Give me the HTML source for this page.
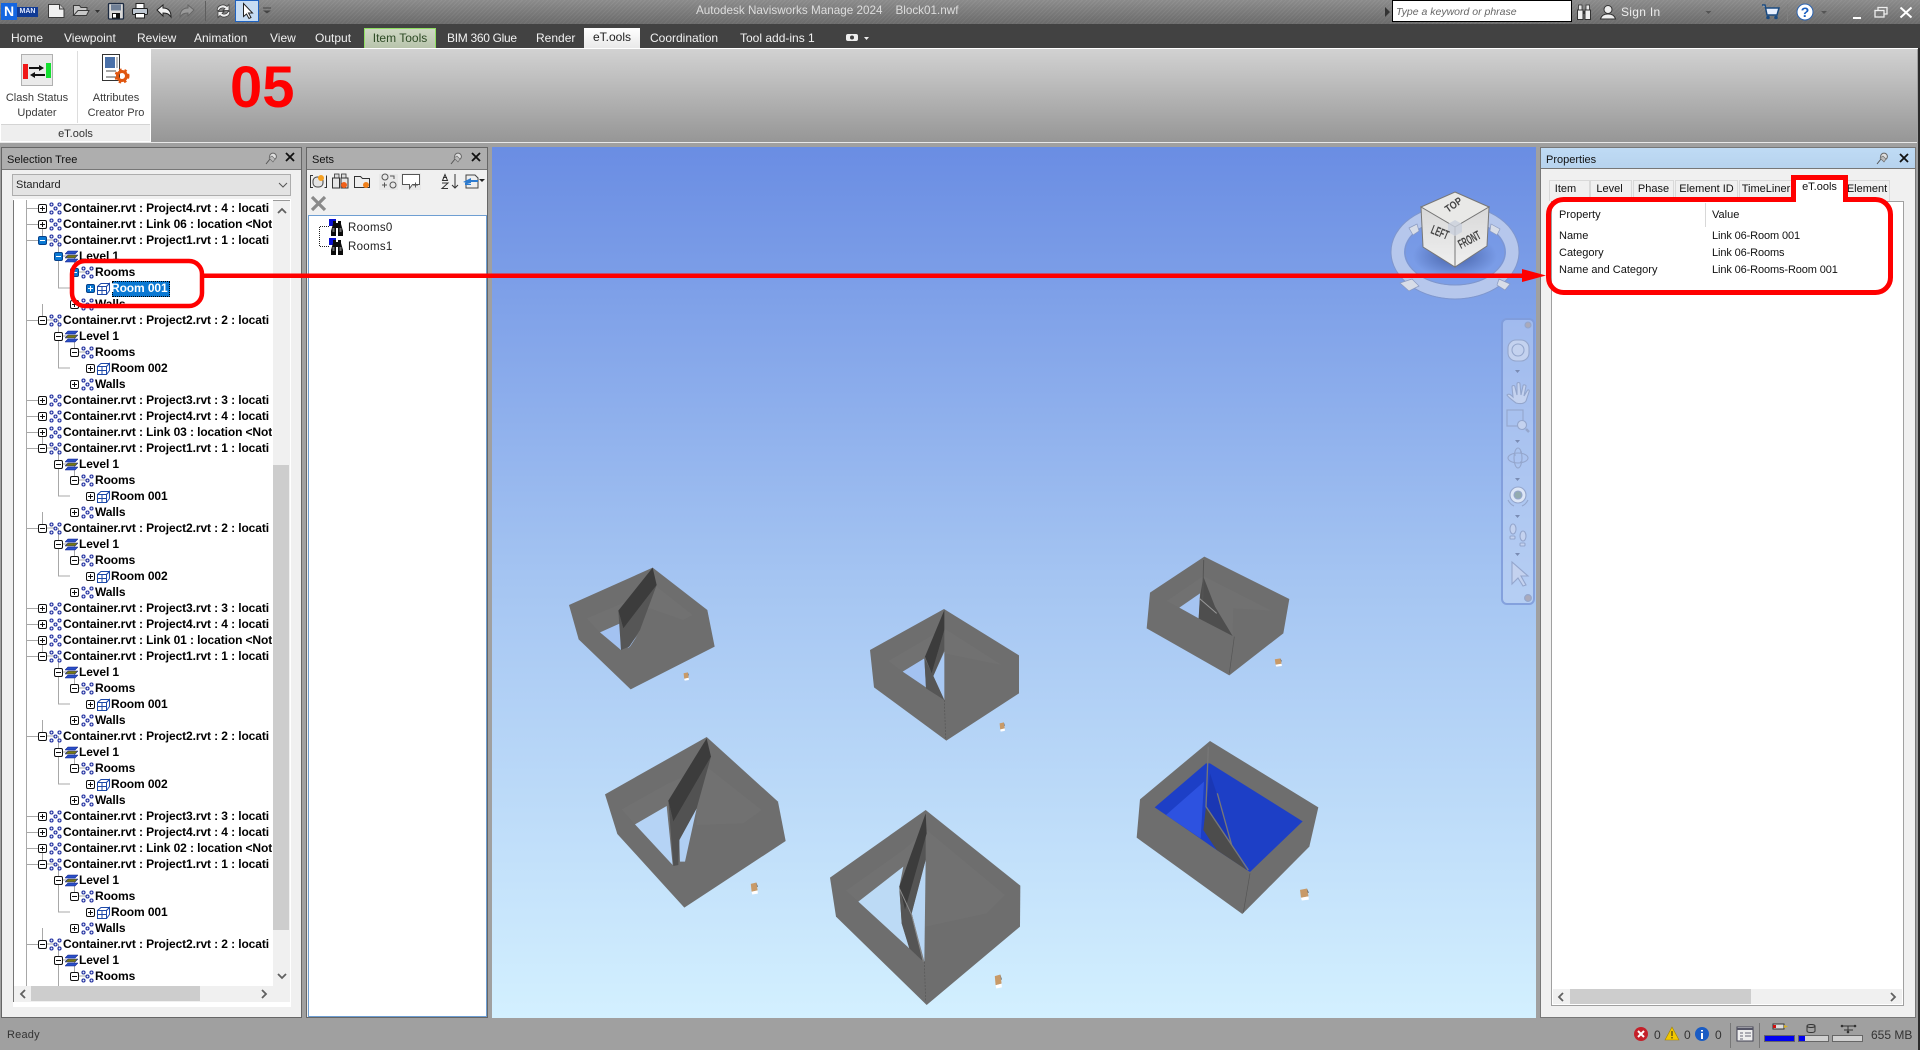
<!DOCTYPE html>
<html><head><meta charset="utf-8"><title>Navisworks</title>
<style>
html,body{margin:0;padding:0;width:1920px;height:1050px;overflow:hidden;background:#a0a0a0;font-family:"Liberation Sans",sans-serif;font-size:12px;color:#111}
div,span,svg,i{position:absolute;box-sizing:border-box}
svg{overflow:visible}
.t{white-space:nowrap;line-height:14px}
.tab{color:#f2f2f2;top:31px}
.r{left:0;height:16px;width:280px;font-weight:bold;font-size:12px;line-height:16px;white-space:nowrap;color:#000}
.r span{top:0;letter-spacing:-.1px}
.r i{top:4px;width:9px;height:9px;border:1px solid #111;border-radius:2px;background:#fff}
.r i::before{content:"";position:absolute;left:1px;right:1px;top:3px;height:1px;background:#111}
.r i.p::after{content:"";position:absolute;top:1px;bottom:1px;left:3px;width:1px;background:#111}
.r i.s{background:#0a78d2;border-color:#05408a}
.r i.s::before,.r i.s::after{background:#fff}
.r svg{top:2px;width:13px;height:13px}
.l0 i{left:38px}.l0 svg{left:49px}.l0 span{left:63px}
.l1 i{left:54px}.l1 svg{left:65px}.l1 span{left:79px}
.l2 i{left:70px}.l2 svg{left:81px}.l2 span{left:95px}
.l3 i{left:86px}.l3 svg{left:97px}.l3 span{left:111px}
.l0::before{content:"";position:absolute;left:26px;width:12px;top:8px;height:1px;background:#a8a8a8}
.panel{background:#f0f0f0;border:1px solid #666}
.hd{background:#aeaeae;border-bottom:1px solid #777}
.tb{top:180px;height:21px;border:1px solid #d9d9d9;border-bottom:0;background:#f0f0f0;font-size:11px;line-height:17px;text-align:center;white-space:nowrap}
.pt{font-size:11px}
.v{letter-spacing:-.12px}
.hdt{font-size:11px;top:153px}
</style></head><body>
<svg width="0" height="0" style="position:absolute"><defs>
<symbol id="c" viewBox="0 0 13 13"><g fill="#e8eefc" stroke="#1c2a9c" stroke-width="1.1"><circle cx="2.5" cy="2.5" r="1.5"/><circle cx="10.5" cy="2.5" r="1.5"/><circle cx="6.5" cy="6.5" r="1.5"/><circle cx="2.5" cy="10.5" r="1.5"/><circle cx="10.5" cy="10.5" r="1.5"/></g></symbol>
<symbol id="l" viewBox="0 0 13 13"><path d="M3 1h10l-3 3H0z" fill="#2a50c8" stroke="#10208a" stroke-width=".6"/><path d="M3 5h10l-3 3H0z" fill="#7a7a10" stroke="#10208a" stroke-width=".6"/><path d="M3 9h10l-3 3H0z" fill="#2a50c8" stroke="#10208a" stroke-width=".6"/></symbol>
<symbol id="m" viewBox="0 0 13 13"><g fill="#fff" stroke="#1c48a8" stroke-width="1"><path d="M.5 4.5L4 1.5h8.5L9.5 4.5z"/><path d="M9.5 4.5L12.5 1.5v7l-3 4z"/><rect x=".5" y="4.5" width="9" height="8"/><path d="M5 4.5v8M.5 8.5h9" fill="none"/></g></symbol>
<symbol id="b" viewBox="0 0 310 300"><path fill="none" stroke="#a8a8a8" d="M42.5 0V16H54M58.500 16V64H70M58.500 32H70M74.500 32V48H86"/></symbol>
<symbol id="pin" viewBox="0 0 13 13"><path d="M1 12L5 7" stroke="#555" fill="none"/><circle cx="8" cy="4.500" r="3.400" fill="#e0e0e0" stroke="#666"/><path d="M4 6l4 4 2-3-3-3z" fill="#bbb" stroke="#666" stroke-width=".6"/></symbol>
<symbol id="x" viewBox="0 0 10 10"><path d="M1 1l8 8M9 1L1 9" stroke="#111" stroke-width="1.800" fill="none"/></symbol>
<symbol id="bn" viewBox="0 0 16 18"><path d="M0 0h7v7H0z" fill="#0a10d0"/><path d="M4 2h3v2h2V2h3v3l2 7v5H9V9H7v8H2v-5l2-7z" fill="#0a0a0a"/><path d="M3.500 9h2v4h-2zM10.500 9h2v4h-2z" fill="#6a6a6a"/></symbol>
<symbol id="fu" viewBox="0 0 10 14" preserveAspectRatio="none"><path d="M1 2L8 .5l1.500 8.500-7.500 1.500z" fill="#c89a68"/><path d="M2 10.500L9.500 9l.3 3.500-7 1z" fill="#fff"/><path d="M8 .5l1.800 4.500-1 .4z" fill="#555"/></symbol>
</defs></svg>

<!-- Title bar -->
<div style="left:0;top:0;width:1920px;height:24px;background:repeating-linear-gradient(135deg,rgba(255,255,255,.03) 0 1px,rgba(0,0,0,.03) 1px 3px),linear-gradient(#8f8f8f,#6e6e6e)"></div>
<div style="left:1px;top:3px;width:16px;height:17px;background:#1566e0;color:#fff;font:bold 14px/17px 'Liberation Sans';text-align:center">N</div>
<div style="left:17px;top:7px;width:21px;height:10px;background:#103a94;color:#dfe8ff;font:bold 7px/10px 'Liberation Sans';text-align:center">MAN</div>
<svg style="left:0;top:0" width="300" height="24">
<path d="M48.500 4.500h11l4.500 4.500v8.500H48.500z" fill="#f0f0f0" stroke="#3a3a3a"/><path d="M59.500 4.500v4.500h4.500" fill="#ccc" stroke="#3a3a3a"/>
<path d="M73.500 15.500V5.500h6l1.500 2h6v3H78l-4.500 5 13 0 2.500-5H78" fill="#c8c8c8" stroke="#3a3a3a"/>
<path d="M95 10h5l-2.500 3z" fill="#333"/>
<rect x="108.500" y="3.500" width="15" height="15.500" rx="1" fill="#d8d8d8" stroke="#1c2a40" stroke-width="1.300"/><rect x="111" y="4.500" width="10" height="6" fill="#6f7f96"/><rect x="112" y="13" width="8" height="5.500" fill="#111"/><rect x="113" y="14" width="3" height="3.500" fill="#fff"/>
<rect x="136" y="3.500" width="8" height="5" fill="#fff" stroke="#222"/><rect x="132.500" y="8.500" width="15" height="6" rx="1" fill="#bfc8d2" stroke="#222"/><rect x="135.500" y="13.500" width="9" height="4.500" fill="#fff" stroke="#222"/>
<path d="M157 10l6-5v3c5 0 8 3 8 9-2-3-4-4-8-4v3z" fill="#f0f0f0" stroke="#222"/>
<path d="M194 10l-6-5v3c-5 0-8 3-8 9 2-3 4-4 8-4v3z" fill="#9a9a9a" stroke="#666"/>
<path d="M205.500 1v20" stroke="#5e5e5e"/>
<path d="M217 10a6 6 0 0 1 10-3.500l2-2v6h-6l2-2a4 4 0 0 0-6 2zM230 12a6 6 0 0 1-10 3.500l-2 2v-6h6l-2 2a4 4 0 0 0 6-2z" fill="#efefef" stroke="#333" stroke-width=".7"/>
<rect x="235.500" y=".5" width="23" height="21" fill="#c6dcf3" stroke="#1e62c0"/>
<path d="M243.500 3.500v13l3-2.500 2.500 4.500 2-1-2.500-4.500h4z" fill="#fff" stroke="#222"/>
<path d="M263 8h8" stroke="#444"/><path d="M263 10.500h8l-4 3z" fill="#444"/>
</svg>
<div class="t" style="left:696px;top:4px;color:#dcdcdc;font-size:11.700px">Autodesk Navisworks Manage 2024&nbsp;&nbsp;&nbsp;&nbsp;Block01.nwf</div>
<svg style="left:1385px;top:7px" width="6" height="10"><path d="M0 0l5 5-5 5z" fill="#333"/></svg>
<div class="t" style="left:1392px;top:0;width:180px;height:22px;background:#fff;border:1px solid #000;font-style:italic;font-size:10.500px;line-height:22px;padding-left:3px;color:#666">Type a keyword or phrase</div>
<svg style="left:1576px;top:4px" width="320" height="18">
<rect x="2.500" y="1" width="3.500" height="5" fill="#e8e8e8" stroke="#333" stroke-width=".8"/><rect x="10" y="1" width="3.500" height="5" fill="#e8e8e8" stroke="#333" stroke-width=".8"/><rect x="1.500" y="6" width="5.500" height="9.500" fill="#efefef" stroke="#333"/><rect x="9" y="6" width="5.500" height="9.500" fill="#efefef" stroke="#333"/><rect x="7" y="7" width="2" height="3" fill="#333"/>
<circle cx="32" cy="5.500" r="4" fill="#eee" stroke="#333"/><path d="M24.500 15c1-4 4-5 7.500-5s6.500 1 7.500 5z" fill="#eee" stroke="#333"/>
<path d="M129.500 7h6l-3 3z" fill="#555"/>
<path d="M186 1h3l2 10h10l2-7h-13" fill="#e8f0ff" stroke="#1a4a80" stroke-width="1.500"/><circle cx="192" cy="13.500" r="1.800" fill="#1a4a80"/><circle cx="200" cy="13.500" r="1.800" fill="#1a4a80"/>
<path d="M211.500 0v17" stroke="#808080"/>
<circle cx="229" cy="8" r="8" fill="#fff" stroke="#2a62b0"/>
<path d="M245 7h6l-3 3z" fill="#555"/>
<rect x="277" y="13" width="8" height="2" fill="#fff"/>
</svg>
<div class="t" style="left:1621px;top:5px;color:#eee;font-size:12px;letter-spacing:.3px">Sign In</div>
<div class="t" style="left:1800px;top:3px;width:10px;text-align:center;color:#1a5fc0;font:bold 14px/18px 'Liberation Sans'">?</div>
<svg style="left:1875px;top:7px" width="40" height="16"><rect x="0" y="3.500" width="9" height="6.500" fill="none" stroke="#eee" stroke-width="1.300"/><path d="M3 3V.5h9v6.500H9.500" fill="none" stroke="#eee" stroke-width="1.300"/><path d="M25.500 .5l11 10M36.500 .5l-11 10" stroke="#fff" stroke-width="2"/></svg>

<!-- Ribbon tabs -->
<div style="left:0;top:24px;width:1920px;height:24px;background:#424242"></div>
<div class="t tab" style="left:11px">Home</div>
<div class="t tab" style="left:64px">Viewpoint</div>
<div class="t tab" style="left:137px">Review</div>
<div class="t tab" style="left:194px">Animation</div>
<div class="t tab" style="left:270px">View</div>
<div class="t tab" style="left:315px">Output</div>
<div class="t" style="left:364px;top:28px;width:72px;height:20px;background:linear-gradient(#cfd8c4,#b8c4ac);border:1px solid #8fe060;border-bottom:0;line-height:18px;text-align:center;color:#2d4a25">Item Tools</div>
<div class="t tab" style="left:447px;letter-spacing:-.3px">BIM 360 Glue</div>
<div class="t tab" style="left:536px">Render</div>
<div class="t" style="left:584px;top:28px;width:56px;height:21px;background:linear-gradient(#fff,#e8e8e8);line-height:19px;text-align:center;color:#222">eT.ools</div>
<div class="t tab" style="left:650px">Coordination</div>
<div class="t tab" style="left:740px">Tool add-ins 1</div>
<svg style="left:846px;top:33px" width="24" height="10"><rect x="0" y="1" width="12" height="7" rx="2" fill="#eee"/><circle cx="6" cy="4.500" r="2" fill="#424242"/><path d="M18 4h5l-2.500 3z" fill="#eee"/></svg>

<!-- Ribbon body -->
<div style="left:0;top:48px;width:1920px;height:1px;background:#fff"></div>
<div style="left:0;top:49px;width:1917px;height:93px;background:linear-gradient(#d2d2d2,#969696)"></div>
<div style="left:0;top:49px;width:151px;height:93px;background:#fff"></div>
<div style="left:1px;top:124px;width:149px;height:17px;background:#eeeeee;border-top:1px solid #d4d4d4;text-align:center;line-height:18px;color:#333;font-size:11px">eT.ools</div>
<div style="left:77px;top:51px;width:1px;height:72px;background:#ddd"></div>
<svg style="left:0;top:49px" width="151" height="40">
<rect x="21.500" y="5.500" width="31" height="31" fill="#eaeaea" stroke="#b0b0b0"/>
<rect x="23" y="15" width="5" height="15" fill="#f01818"/><rect x="46" y="14" width="5" height="15" fill="#14e030"/>
<path d="M29 18h10v-2l5 3-5 3v-2H29zM45 25H35v-2l-5 3 5 3v-2h10z" fill="#111"/>
<path d="M102.500 5.500h17v26h-17z" fill="#fff" stroke="#333"/><rect x="105" y="8" width="10" height="11" fill="#4a70a8"/><path d="M117 8v11" stroke="#bbb" stroke-width="2"/><path d="M106 22h10M106 28h12" stroke="#888" stroke-width="1.500"/>
<circle cx="122" cy="27" r="4.500" fill="none" stroke="#e0560f" stroke-width="3"/><circle cx="122" cy="27" r="6.500" fill="none" stroke="#e0560f" stroke-width="2" stroke-dasharray="2.500 3"/>
</svg>
<div class="t" style="left:0;top:90px;width:74px;text-align:center;color:#3a3a3a;line-height:15px;font-size:11px;padding-top:1px">Clash Status<br>Updater</div>
<div class="t" style="left:80px;top:90px;width:72px;text-align:center;color:#3a3a3a;line-height:15px;font-size:11px;padding-top:1px">Attributes<br>Creator Pro</div>
<div class="t" style="left:230px;top:55px;color:#f00;font:bold 58px/66px 'Liberation Sans'">05</div>
<div style="left:0;top:142px;width:1917px;height:1px;background:#e8e8e8"></div>
<div style="left:1918px;top:48px;width:2px;height:1002px;background:#2c2c2c"></div>

<!-- Selection Tree -->
<div class="panel" style="left:1px;top:147px;width:301px;height:871px"></div>
<div class="hd" style="left:2px;top:148px;width:299px;height:22px"></div>
<div class="t hdt" style="left:7px">Selection Tree</div>
<svg style="left:265px;top:152px" width="13" height="13"><use href="#pin"/></svg>
<svg style="left:285px;top:152px" width="10" height="10"><use href="#x"/></svg>
<div style="left:12px;top:174px;width:279px;height:22px;background:#e3e3e3;border:1px solid #adadad"></div>
<div class="t" style="left:16px;top:178px;color:#222;font-size:11px">Standard</div>
<svg style="left:278px;top:182px" width="10" height="6"><path d="M1 1l4 4 4-4" stroke="#555" fill="none"/></svg>
<div style="left:13px;top:199px;width:278px;height:808px;background:#fff"></div>
<div style="left:13px;top:200px;width:277px;height:802px;background:#f0f0f0;border-left:1px solid #777;border-top:1px solid #999"></div>
<div style="left:14px;top:200px;width:259px;height:786px;background:#fff"></div>
<div style="left:273px;top:465px;width:16px;height:465px;background:#cdcdcd"></div>
<svg style="left:274px;top:206px" width="16" height="10"><path d="M4 7l4-4 4 4" stroke="#606060" stroke-width="1.800" fill="none"/></svg>
<svg style="left:274px;top:971px" width="16" height="10"><path d="M4 3l4 4 4-4" stroke="#606060" stroke-width="1.800" fill="none"/></svg>
<div style="left:31px;top:986px;width:169px;height:15px;background:#cdcdcd"></div>
<svg style="left:18px;top:988px" width="10" height="12"><path d="M7 2L3 6l4 4" stroke="#606060" stroke-width="1.800" fill="none"/></svg>
<svg style="left:259px;top:988px" width="10" height="12"><path d="M3 2l4 4-4 4" stroke="#606060" stroke-width="1.800" fill="none"/></svg>

<div style="left:0;top:0;width:272px;height:986px;clip-path:inset(200px 0 0 14px)">
<svg style="left:0;top:0" width="273" height="1000"><path d="M26.500 200V986" stroke="#a8a8a8"/>
<use href="#b" width="310" height="300" y="224"/><use href="#b" width="310" height="300" y="304"/><use href="#b" width="310" height="300" y="432"/><use href="#b" width="310" height="300" y="512"/><use href="#b" width="310" height="300" y="640"/><use href="#b" width="310" height="300" y="720"/><use href="#b" width="310" height="300" y="848"/><use href="#b" width="310" height="300" y="928"/></svg>
<div class="r l0" style="top:200px"><i class="p"></i><svg><use href="#c"/></svg><span>Container.rvt : Project4.rvt : 4 : locati</span></div>
<div class="r l0" style="top:216px"><i class="p"></i><svg><use href="#c"/></svg><span>Container.rvt : Link 06 : location &lt;Not</span></div>
<div class="r l0" style="top:232px"><i class="s"></i><svg><use href="#c"/></svg><span>Container.rvt : Project1.rvt : 1 : locati</span></div>
<div class="r l1" style="top:248px"><i class="s"></i><svg><use href="#l"/></svg><span>Level 1</span></div>
<div class="r l2" style="top:264px"><i class="s"></i><svg><use href="#c"/></svg><span>Rooms</span></div>
<div style="left:112px;top:281px;width:58px;height:16px;background:#0a78d2;border:1px dotted #000"></div>
<div class="r l3" style="top:280px"><i class="p s"></i><svg><use href="#m"/></svg><span style="color:#fff">Room 001</span></div>
<div class="r l2" style="top:296px"><i class="p"></i><svg><use href="#c"/></svg><span>Walls</span></div>
<div class="r l0" style="top:312px"><i></i><svg><use href="#c"/></svg><span>Container.rvt : Project2.rvt : 2 : locati</span></div>
<div class="r l1" style="top:328px"><i></i><svg><use href="#l"/></svg><span>Level 1</span></div>
<div class="r l2" style="top:344px"><i></i><svg><use href="#c"/></svg><span>Rooms</span></div>
<div class="r l3" style="top:360px"><i class="p"></i><svg><use href="#m"/></svg><span>Room 002</span></div>
<div class="r l2" style="top:376px"><i class="p"></i><svg><use href="#c"/></svg><span>Walls</span></div>
<div class="r l0" style="top:392px"><i class="p"></i><svg><use href="#c"/></svg><span>Container.rvt : Project3.rvt : 3 : locati</span></div>
<div class="r l0" style="top:408px"><i class="p"></i><svg><use href="#c"/></svg><span>Container.rvt : Project4.rvt : 4 : locati</span></div>
<div class="r l0" style="top:424px"><i class="p"></i><svg><use href="#c"/></svg><span>Container.rvt : Link 03 : location &lt;Not</span></div>
<div class="r l0" style="top:440px"><i></i><svg><use href="#c"/></svg><span>Container.rvt : Project1.rvt : 1 : locati</span></div>
<div class="r l1" style="top:456px"><i></i><svg><use href="#l"/></svg><span>Level 1</span></div>
<div class="r l2" style="top:472px"><i></i><svg><use href="#c"/></svg><span>Rooms</span></div>
<div class="r l3" style="top:488px"><i class="p"></i><svg><use href="#m"/></svg><span>Room 001</span></div>
<div class="r l2" style="top:504px"><i class="p"></i><svg><use href="#c"/></svg><span>Walls</span></div>
<div class="r l0" style="top:520px"><i></i><svg><use href="#c"/></svg><span>Container.rvt : Project2.rvt : 2 : locati</span></div>
<div class="r l1" style="top:536px"><i></i><svg><use href="#l"/></svg><span>Level 1</span></div>
<div class="r l2" style="top:552px"><i></i><svg><use href="#c"/></svg><span>Rooms</span></div>
<div class="r l3" style="top:568px"><i class="p"></i><svg><use href="#m"/></svg><span>Room 002</span></div>
<div class="r l2" style="top:584px"><i class="p"></i><svg><use href="#c"/></svg><span>Walls</span></div>
<div class="r l0" style="top:600px"><i class="p"></i><svg><use href="#c"/></svg><span>Container.rvt : Project3.rvt : 3 : locati</span></div>
<div class="r l0" style="top:616px"><i class="p"></i><svg><use href="#c"/></svg><span>Container.rvt : Project4.rvt : 4 : locati</span></div>
<div class="r l0" style="top:632px"><i class="p"></i><svg><use href="#c"/></svg><span>Container.rvt : Link 01 : location &lt;Not</span></div>
<div class="r l0" style="top:648px"><i></i><svg><use href="#c"/></svg><span>Container.rvt : Project1.rvt : 1 : locati</span></div>
<div class="r l1" style="top:664px"><i></i><svg><use href="#l"/></svg><span>Level 1</span></div>
<div class="r l2" style="top:680px"><i></i><svg><use href="#c"/></svg><span>Rooms</span></div>
<div class="r l3" style="top:696px"><i class="p"></i><svg><use href="#m"/></svg><span>Room 001</span></div>
<div class="r l2" style="top:712px"><i class="p"></i><svg><use href="#c"/></svg><span>Walls</span></div>
<div class="r l0" style="top:728px"><i></i><svg><use href="#c"/></svg><span>Container.rvt : Project2.rvt : 2 : locati</span></div>
<div class="r l1" style="top:744px"><i></i><svg><use href="#l"/></svg><span>Level 1</span></div>
<div class="r l2" style="top:760px"><i></i><svg><use href="#c"/></svg><span>Rooms</span></div>
<div class="r l3" style="top:776px"><i class="p"></i><svg><use href="#m"/></svg><span>Room 002</span></div>
<div class="r l2" style="top:792px"><i class="p"></i><svg><use href="#c"/></svg><span>Walls</span></div>
<div class="r l0" style="top:808px"><i class="p"></i><svg><use href="#c"/></svg><span>Container.rvt : Project3.rvt : 3 : locati</span></div>
<div class="r l0" style="top:824px"><i class="p"></i><svg><use href="#c"/></svg><span>Container.rvt : Project4.rvt : 4 : locati</span></div>
<div class="r l0" style="top:840px"><i class="p"></i><svg><use href="#c"/></svg><span>Container.rvt : Link 02 : location &lt;Not</span></div>
<div class="r l0" style="top:856px"><i></i><svg><use href="#c"/></svg><span>Container.rvt : Project1.rvt : 1 : locati</span></div>
<div class="r l1" style="top:872px"><i></i><svg><use href="#l"/></svg><span>Level 1</span></div>
<div class="r l2" style="top:888px"><i></i><svg><use href="#c"/></svg><span>Rooms</span></div>
<div class="r l3" style="top:904px"><i class="p"></i><svg><use href="#m"/></svg><span>Room 001</span></div>
<div class="r l2" style="top:920px"><i class="p"></i><svg><use href="#c"/></svg><span>Walls</span></div>
<div class="r l0" style="top:936px"><i></i><svg><use href="#c"/></svg><span>Container.rvt : Project2.rvt : 2 : locati</span></div>
<div class="r l1" style="top:952px"><i></i><svg><use href="#l"/></svg><span>Level 1</span></div>
<div class="r l2" style="top:968px"><i></i><svg><use href="#c"/></svg><span>Rooms</span></div>
</div>

<!-- Sets -->
<div class="panel" style="left:306px;top:147px;width:182px;height:871px"></div>
<div class="hd" style="left:307px;top:148px;width:180px;height:22px"></div>
<div class="t hdt" style="left:312px">Sets</div>
<svg style="left:450px;top:152px" width="13" height="13"><use href="#pin"/></svg>
<svg style="left:471px;top:152px" width="10" height="10"><use href="#x"/></svg>
<svg style="left:305px;top:165px" width="183" height="50">
<path d="M8 10.500H5.500V22.500H8M19.500 22.500H21.500V10.500" stroke="#333" fill="none"/><rect x="8" y="12" width="10" height="10" rx="4" fill="#e4e4e4" stroke="#444"/><circle cx="16" cy="13" r="3" fill="#f5a020"/>
<rect x="29.500" y="9" width="4.500" height="4" fill="#ddd" stroke="#333" stroke-width=".8"/><rect x="36.500" y="9" width="4.500" height="4" fill="#ddd" stroke="#333" stroke-width=".8"/><rect x="27.500" y="13" width="7" height="10" fill="#e6e6e6" stroke="#333"/><rect x="36" y="13" width="7" height="10" fill="#e6e6e6" stroke="#333"/><circle cx="39" cy="20" r="3" fill="#f0601a"/>
<path d="M49.500 11.500h6l2 2h7v9h-15z" fill="#eee" stroke="#333"/><circle cx="61" cy="20" r="3" fill="#f0801a"/>
<rect x="74" y="9" width="19" height="16" fill="#e8e8e8"/><circle cx="80" cy="12" r="3" fill="none" stroke="#555"/><circle cx="88" cy="20" r="3" fill="none" stroke="#555"/><path d="M77 20h5M79.500 17.500v5M85 11h4v3" stroke="#555" fill="none"/>
<rect x="96" y="8" width="20" height="17" fill="#e8e8e8"/><path d="M97.500 9.500h17v10h-7l-3 4v-4h-7z" fill="#fff" stroke="#555"/><path d="M108 20h5M110.500 17.500v5" stroke="#555"/>
<path d="M140 9.500l-2.500 6h5zM138 12.500h4M137 18h6l-6 5.500h6M150 9v14m-3-3l3 3 3-3" stroke="#333" fill="none"/>
<path d="M161 10h9l3 3v10h-12z" fill="#eee" stroke="#444"/><path d="M158 17l8-4v2h7v2h-7v2zM174 16l-8 4v-2h-6v2h6z" fill="#2a7ad0"/><path d="M174 14h6l-3 3z" fill="#222"/>
<path d="M7 32l13 13M20 32L7 45" stroke="#8a8a8a" stroke-width="3.200"/>
</svg>
<div style="left:308px;top:215px;width:179px;height:802px;background:#fff;border:1px solid #6e9ed2"></div>
<svg style="left:319px;top:226px" width="30" height="30"><path d="M10 .5H.5V20.500H10" stroke="#222" stroke-dasharray="1 1" fill="none"/></svg>
<svg style="left:329px;top:219px" width="16" height="18"><use href="#bn"/></svg>
<svg style="left:329px;top:238px" width="16" height="18"><use href="#bn"/></svg>
<div class="t" style="left:348px;top:221px;color:#222;font-size:11.500px;letter-spacing:.3px">Rooms0</div>
<div class="t" style="left:348px;top:240px;color:#222;font-size:11.500px;letter-spacing:.3px">Rooms1</div>

<!-- 3D view -->
<div style="left:492px;top:147px;width:1044px;height:871px;background:linear-gradient(#6a8de3,#a5c5f2 50%,#d3f0ff)"></div>
<svg style="left:0;top:0" width="1920" height="1050">
<g transform="translate(540,550) scale(.33333)">
<polygon points="87,165 338,53 502,180 524,290 272,418 116,268" fill="#6e6e6e"/>
<polygon points="140,205 235,165 350,110 458,195 430,210 330,175 180,247" fill="#717171"/>
<polygon points="180,247 240,220 243,300" fill="#a3c2f1"/><polygon points="293,255 262,295 270,290" fill="#a3c2f1"/>
<polygon points="235,182 250,235 350,105 300,240 268,290 243,300" fill="#565656"/>
<polygon points="235,182 338,53 350,105 250,235" fill="#3c3c3c"/>

<polygon points="990,300 1212,177 1437,316 1437,430 1219,572 1002,412" fill="#6e6e6e"/>
<polygon points="1045,333 1153,270 1213,235 1385,345 1213,310 1153,322 1088,365" fill="#717171"/>
<polygon points="1088,365 1153,325 1158,412" fill="#a3c2f1"/><polygon points="1180,378 1213,305 1213,450" fill="#a9c9f3"/>
<polygon points="1153,322 1175,370 1213,240 1213,300 1180,378 1213,450 1158,415" fill="#565656"/>
<polygon points="1155,320 1213,180 1213,240 1175,370" fill="#3c3c3c"/>
<path d="M1213 450L1217 565" stroke="#555" stroke-width="2" stroke-dasharray="6 4"/>

<polygon points="195,733 500,561 714,755 737,873 433,1073 232,852" fill="#6e6e6e"/>
<polygon points="245,778 385,700 500,650 665,780 610,820 470,825 470,790 285,823" fill="#717171"/>
<polygon points="285,823 380,768 398,945" fill="#b5d3f5"/><polygon points="418,870 470,775 435,935 420,935" fill="#b0cff3"/>
<polygon points="385,752 400,815 513,620 470,775 418,870 415,945 400,948" fill="#525252"/>
<polygon points="385,752 500,565 513,620 400,815" fill="#3c3c3c"/>

<polygon points="870,983 1157,780 1441,1007 1440,1130 1160,1365 888,1100" fill="#6e6e6e"/>
<polygon points="918,1022 1090,900 1160,840 1395,1035 1340,1090 1157,1130 1108,1195 955,1055" fill="#717171"/>
<polygon points="955,1055 1090,950 1078,1010 1085,1120 1108,1195" fill="#bcdaf5"/><polygon points="1115,1090 1157,930 1153,1235" fill="#b8d6f4"/>
<polygon points="1078,1015 1085,1120 1108,1195 1150,1235 1115,1090 1157,930 1157,850 1095,1080" fill="#555"/>
<polygon points="1078,1010 1157,790 1160,850 1095,1080" fill="#3c3c3c"/>
<path d="M1078 1015L1115 1095 1150 1235" stroke="#8a8a8a" stroke-width="3" fill="none"/>
<path d="M1153 1235L1157 1355" stroke="#555" stroke-width="2" stroke-dasharray="6 4"/>
</g>
<g transform="translate(1040,540) scale(.33333)">
<polygon points="330,158 493,50 748,177 730,280 568,406 320,265" fill="#6e6e6e"/>
<polygon points="380,183 490,108 695,212 580,205 578,288 476,235 418,203" fill="#717171"/>
<polygon points="418,203 480,160 476,235" fill="#a5c4f1"/>
<polygon points="476,235 480,170 490,110 525,200 578,288" fill="#4e4e4e"/>
<path d="M478 175L530 220" stroke="#999" stroke-width="3"/><path d="M491 60L488 180" stroke="#555" stroke-width="3"/>
<path d="M583 290L568 400" stroke="#555" stroke-width="2"/>

<polygon points="300,778 510,603 835,802 808,920 607,1122 290,893" fill="#6e6e6e"/>
<polygon points="344,802 498,670 510,670 788,844 630,996 530,930 480,895 378,825" fill="#1d3fc6"/>
<polygon points="378,825 492,725 482,895" fill="#2d52e0"/>
<polygon points="498,800 490,870 530,930 620,990 575,915" fill="#4c4c4c"/>
<polygon points="510,700 498,800 575,915 530,760" fill="#1a37b4"/>
<path d="M505 620L498 800 575 915 625 990M532 760L575 915" stroke="#777" stroke-width="4" fill="none"/>
<path d="M630 1000L610 1118" stroke="#555" stroke-width="2"/>
</g>
<use href="#fu" x="683" y="672" width="6" height="9"/>
<use href="#fu" x="750" y="882" width="8" height="13"/>
<use href="#fu" x="999" y="722" width="6" height="10"/>
<use href="#fu" x="994" y="974" width="8" height="15"/>
<use href="#fu" x="1274" y="658" width="8" height="9"/>
<use href="#fu" x="1299" y="888" width="10" height="13"/>
</svg>

<!-- ViewCube -->
<svg style="left:0;top:0" width="1920" height="1050">
<defs><radialGradient id="sh"><stop offset="0" stop-color="#2c4488" stop-opacity=".65"/><stop offset="1" stop-color="#2c4488" stop-opacity="0"/></radialGradient>
<linearGradient id="fc" x1="0" y1="0" x2="0" y2="1"><stop offset="0" stop-color="#d8d8d8"/><stop offset="1" stop-color="#f0f0f0"/></linearGradient></defs>
<ellipse cx="1455" cy="252" rx="57.500" ry="40" fill="none" stroke="#b6c7ec" stroke-width="13"/>
<ellipse cx="1455" cy="252" rx="64" ry="47" fill="none" stroke="#7f96cc" stroke-width="1"/>
<ellipse cx="1455" cy="252" rx="50" ry="33" fill="none" stroke="#7f96cc" stroke-width="1"/>
<ellipse cx="1455" cy="256" rx="42" ry="22" fill="url(#sh)"/>
<path d="M1409 228l8-4 2 7-6 4zM1491 224l9 5-3 6-7-4zM1400 283l12-4 7 7-10 5zM1499 279l11 5-5 6-8-5z" fill="#d8dde8" stroke="#8a9ac0" stroke-width=".7"/>
<polygon points="1455,192 1489,207 1455,227 1421,207" fill="#e9e9e7" stroke="#777"/>
<polygon points="1421,207 1455,227 1455,267 1423,247" fill="url(#fc)" stroke="#777"/>
<polygon points="1489,207 1487,246 1455,267 1455,227" fill="url(#fc)" stroke="#777"/>
<polygon points="1455,220 1462,224 1462,232 1455,236 1448,232 1448,224" fill="#c9cfdc" opacity=".8"/>
<text transform="translate(1448,213) rotate(-35) scale(.9,1.050)" font-family="Liberation Sans" font-weight="bold" font-size="10" fill="#444">TOP</text>
<text transform="translate(1430,233) rotate(22) scale(.72,1.300)" font-family="Liberation Sans" font-weight="bold" font-size="10" fill="#444">LEFT</text>
<text transform="translate(1461,249) rotate(-28) scale(.68,1.300)" font-family="Liberation Sans" font-weight="bold" font-size="10" fill="#444">FRONT</text>
</svg>

<!-- Nav bar -->
<div style="left:1501px;top:318px;width:34px;height:287px;border:2px solid rgba(120,150,215,.8);border-radius:6px;background:rgba(200,215,245,.45)"></div>
<svg style="left:1480px;top:310px" width="60" height="310">
<g fill="#c4d2ef" stroke="#94a6cc" stroke-width="1.100">
<circle cx="48" cy="15" r="3" fill="#aab"/>
<rect x="28" y="30" width="21" height="21" rx="8"/><circle cx="38" cy="40" r="6"/>
<path d="M36 93c-4-3-8-6-9-8 2-2 4 0 6 2l-1-10c0-2 3-2 3 0l2 8 0-11c0-2 3-2 3 0l1 11 2-9c0-2 3-1 3 0l-2 10 3-5c1-2 3-1 2 1l-3 9c-2 3-6 3-10 2z"/>
<rect x="27" y="100" width="16" height="16" fill="none"/><circle cx="42" cy="115" r="4.500"/><path d="M46 119l3 3" stroke-width="2.500"/>
<ellipse cx="38" cy="148" rx="10" ry="5" fill="none"/><ellipse cx="38" cy="148" rx="4" ry="10" fill="none"/><path d="M34 145h2M40 152h2M40 142h2" />
<circle cx="38" cy="185" r="8" fill="#dde6f6"/><circle cx="38" cy="185" r="4" fill="#93abb0"/><path d="M28 190c2 4 4 5 6 6M48 190c-2 4-4 5-6 6" fill="none"/>
<ellipse cx="33" cy="219" rx="3" ry="5"/><rect x="30" y="226" width="5" height="3" rx="1"/><ellipse cx="43" cy="226" rx="3" ry="5"/><rect x="40" y="233" width="5" height="3" rx="1"/>
<path d="M32 252v22l6-6 5 8 3-1-5-9h7z"/>
<circle cx="48" cy="288" r="3.400" fill="#aab"/>
</g>
<path d="M35 60h5l-2.500 3zM35 130h5l-2.500 3zM35 168h5l-2.500 3zM35 205h5l-2.500 3zM35 243h5l-2.500 3z" fill="#7a8cb4"/>
</svg>

<!-- Properties -->
<div style="left:1540px;top:147px;width:376px;height:871px;background:#f0f0f0;border:1px solid #777"></div>
<div style="left:1541px;top:148px;width:374px;height:21px;background:linear-gradient(#bfdbf5,#b7d3ee);border-bottom:1px solid #777"></div>
<div class="t hdt" style="left:1546px">Properties</div>
<svg style="left:1876px;top:152px" width="13" height="13"><use href="#pin"/></svg>
<svg style="left:1899px;top:153px" width="10" height="10"><use href="#x"/></svg>
<div class="tb" style="left:1549px;width:41px;padding-right:8px">Item</div>
<div class="tb" style="left:1590px;width:42px;padding-right:3px">Level</div>
<div class="tb" style="left:1633px;width:41px">Phase</div>
<div class="tb" style="left:1675px;width:63px">Element ID</div>
<div class="tb" style="left:1739px;width:54px">TimeLiner</div>
<div class="tb" style="left:1843px;width:47px;padding-left:1px">Element</div>
<div style="left:1551px;top:201px;width:353px;height:805px;background:#fff;border:1px solid #a0a0a0"></div>
<div class="tb" style="left:1796px;width:47px;top:178px;height:24px;background:#fff;border:0;line-height:19px">eT.ools</div>
<div class="t pt" style="left:1559px;top:208px">Property</div>
<div class="t pt" style="left:1712px;top:208px">Value</div>
<div style="left:1705px;top:203px;width:1px;height:24px;background:#d8d8d8"></div>
<div class="t pt" style="left:1559px;top:229px">Name</div>
<div class="t pt v" style="left:1712px;top:229px">Link 06-Room 001</div>
<div class="t pt" style="left:1559px;top:246px">Category</div>
<div class="t pt v" style="left:1712px;top:246px">Link 06-Rooms</div>
<div class="t pt" style="left:1559px;top:263px">Name and Category</div>
<div class="t pt v" style="left:1712px;top:263px">Link 06-Rooms-Room 001</div>
<div style="left:1553px;top:989px;width:349px;height:15px;background:#f0f0f0"></div>
<div style="left:1570px;top:989px;width:181px;height:15px;background:#cdcdcd"></div>
<svg style="left:1556px;top:991px" width="10" height="12"><path d="M7 2L3 6l4 4" stroke="#606060" stroke-width="1.800" fill="none"/></svg>
<svg style="left:1888px;top:991px" width="10" height="12"><path d="M3 2l4 4-4 4" stroke="#606060" stroke-width="1.800" fill="none"/></svg>

<!-- Red annotations -->
<svg style="left:0;top:0" width="1920" height="1050">
<rect x="72" y="261" width="130" height="45" rx="13" fill="none" stroke="#f00" stroke-width="4.500"/>
<rect x="1548.500" y="199.500" width="342" height="93" rx="15" fill="none" stroke="#f00" stroke-width="5"/>
<path d="M1793.500 199V177.500H1845.500V199" fill="none" stroke="#f00" stroke-width="5"/>
<rect x="1796" y="197" width="47" height="6" fill="#fff"/>
<path d="M204 273.500H1522V269L1546 275.500 1522 282V278H204z" fill="#f00"/>
</svg>

<!-- Status bar -->
<div class="t" style="left:7px;top:1028px;color:#333;font-size:11px;letter-spacing:.2px">Ready</div>
<svg style="left:1620px;top:1020px" width="300" height="28">
<circle cx="21" cy="14" r="7" fill="#c4202a"/><path d="M18 11l6 6M24 11l-6 6" stroke="#fff" stroke-width="2"/>
<path d="M52 7l7 13H45z" fill="#f2c800" stroke="#a08000" stroke-width=".6"/><path d="M52 11v5M52 17v1.500" stroke="#222"/>
<circle cx="82" cy="14" r="7" fill="#1a5cc4"/><path d="M82 10v1.500M82 13v6" stroke="#fff" stroke-width="2"/>
<path d="M110.500 3v25M139.500 3v25" stroke="#777"/>
<rect x="117" y="7" width="16" height="14" fill="#eee" stroke="#445"/><path d="M117 9h16" stroke="#556" stroke-width="2"/><path d="M120 13h3M125 13h6M120 16h3M125 16h6M120 19h3" stroke="#667"/>
<rect x="153" y="4" width="11" height="5" fill="#ddd" stroke="#333"/><rect x="153" y="5" width="3" height="3" fill="#d01010"/><path d="M164 5l4 1.500-4 1.500z" fill="#d9b020"/>
<rect x="144.500" y="15.500" width="30" height="6" fill="#0000f0" stroke="#666"/>
<rect x="178.500" y="15.500" width="30" height="6" fill="#d0d0d0" stroke="#666"/><rect x="179" y="16" width="6" height="5" fill="#0000f0"/>
<rect x="212.500" y="15.500" width="30" height="6" fill="#d0d0d0" stroke="#666"/>
<ellipse cx="191" cy="6" rx="4" ry="1.500" fill="none" stroke="#333"/><path d="M187 6v5c0 2 8 2 8 0V6" fill="none" stroke="#333"/>
<path d="M222 6h13M228 6v6M224 10h9" stroke="#333" fill="none"/><circle cx="222" cy="6" r="1.300" fill="#333"/><circle cx="235" cy="6" r="1.300" fill="#333"/><circle cx="228" cy="12" r="1.300" fill="#333"/>
</svg>
<div class="t" style="left:1654px;top:1028px;color:#333">0</div>
<div class="t" style="left:1684px;top:1028px;color:#333">0</div>
<div class="t" style="left:1715px;top:1028px;color:#333">0</div>
<div class="t" style="left:1871px;top:1028px;color:#333">655 MB</div>
</body></html>
